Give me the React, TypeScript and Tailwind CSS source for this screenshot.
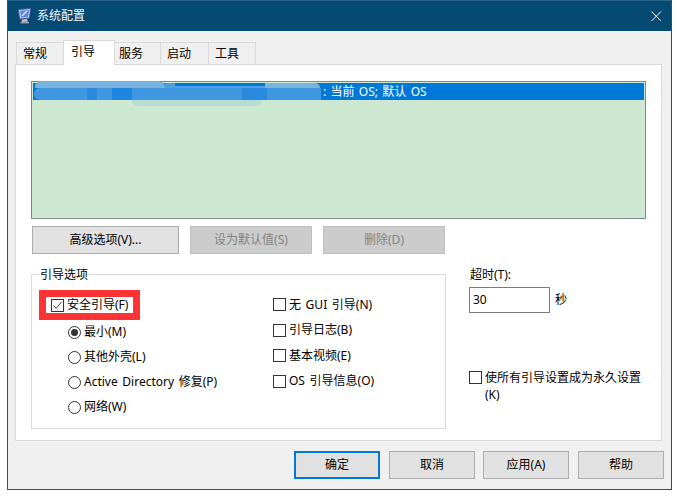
import React from "react";

const font = { fontFamily: '"Noto Sans", "Noto Sans CJK SC", sans-serif' };

function Tab({ label, active, w }: { label: string; active?: boolean; w: string }) {
  return active ? (
    <div className={`${w} relative z-10 h-[25px] -mb-px -ml-px bg-white border border-b-0 border-[#d9d9d9] pt-[3px] text-black`}>{label}</div>
  ) : (
    <div className={`${w} h-[22px] -ml-px bg-[#f0f0f0] border border-b-0 border-[#d9d9d9] flex items-center text-black`}>{label}</div>
  );
}

function Btn({ label, w, disabled, primary }: { label: string; w: string; disabled?: boolean; primary?: boolean }) {
  const cls = disabled
    ? "bg-[#cccccc] border-[#bfbfbf] text-[#838383]"
    : primary
    ? "bg-[#e1e1e1] border-[#0078d7] border-2 text-black"
    : "bg-[#e1e1e1] border-[#adadad] text-black";
  return <div className={`${w} h-[28px] border flex items-center justify-center ${cls}`}>{label}</div>;
}

function Check({ checked }: { checked?: boolean }) {
  return (
    <span className="w-[13px] h-[13px] shrink-0 border border-[#333333] bg-white flex items-center justify-center">
      {checked && (
        <svg width="11" height="11" viewBox="0 0 11 11" fill="none">
          <path d="M1.5 5.5 L4.2 8.3 L9.6 1.8" stroke="#333333" strokeWidth="1" />
        </svg>
      )}
    </span>
  );
}

function Radio({ on }: { on?: boolean }) {
  return (
    <span className="w-[13px] h-[13px] shrink-0 rounded-full border border-[#333333] bg-white flex items-center justify-center">
      {on && <span className="w-[7px] h-[7px] rounded-full bg-[#333333]" />}
    </span>
  );
}

function RadioRow({ label, on }: { label: string; on?: boolean }) {
  return (
    <div className="h-[25px] flex items-center gap-[3px] pl-[36px]">
      <Radio on={on} />
      <span className="[word-spacing:1.5px]">{label}</span>
    </div>
  );
}

function CheckRow({ label }: { label: string }) {
  return (
    <div className="h-[25.5px] flex items-center gap-[3px]">
      <Check />
      <span className="[word-spacing:1.5px]">{label}</span>
    </div>
  );
}

function MonitorIcon() {
  return (
    <svg width="15" height="16" viewBox="0 0 15 16">
      <path d="M1.5 1.5 L13.5 0.5 L12.5 10 L2.5 11 Z" fill="#c9d3ea" stroke="#4b5a9a" strokeWidth="1" />
      <path d="M3.3 2.8 L12 2 L11.2 8.8 L4 9.5 Z" fill="#5c86d8" />
      <path d="M5 8 L10 3" stroke="#dbe8ff" strokeWidth="1.4" />
      <path d="M5 11.5 L10 11 L11 13.5 L4.5 14 Z" fill="#c4c8cf" />
      <path d="M3.5 14 H12 V15.5 H3.5 Z" fill="#9a9fa8" />
    </svg>
  );
}

export default function App() {
  return (
    <div className="w-[679px] h-[497px] bg-white pl-[7px] overflow-hidden text-[12px] leading-[16px]" style={font}>
      <div className="w-[665px] h-[490px] border-x border-b border-[#1f5578] bg-[#f0f0f0] flex flex-col">
        <div className="h-[31px] shrink-0 bg-[#044a73] border-t border-[#2a6389] flex items-center pl-[9px] pr-[9px] text-white">
          <MonitorIcon />
          <span className="ml-[5px] text-[#f4f8fb]">系统配置</span>
          <svg className="ml-auto" width="12" height="12" viewBox="0 0 12 12" fill="none">
            <path d="M1.5 1.5 L11 11 M11 1.5 L1.5 11" stroke="#ffffff" strokeWidth="1" />
          </svg>
        </div>

        <div className="flex-1 flex flex-col pl-[7px] pr-[9px]">
          <div className="h-[33px] shrink-0 flex items-end pl-[2px]">
            <Tab label="常规" w="w-[48px] pl-[6px]" />
            <Tab label="引导" w="w-[52px] pl-[7px]" active />
            <Tab label="服务" w="w-[47px] pl-[4px]" />
            <Tab label="启动" w="w-[49px] pl-[6px]" />
            <Tab label="工具" w="w-[48px] pl-[6px]" />
          </div>

          <div className="h-[377px] shrink-0 bg-white border border-[#d9d9d9] pl-[15px] pr-[15px] pt-[16px] flex flex-col">
            <div className="relative h-[138px] shrink-0 border border-[#828790] bg-[#cde8d0] p-[1px]">
              <div className="h-[17px] bg-[#0078d7] text-white flex items-center pl-[290px]">
                <span className="[word-spacing:1.2px]">: 当前 OS; 默认 OS</span>
              </div>
              <div className="absolute left-[2px] top-[6px] w-[287px] h-[12px] bg-[#3f97e0] rounded-l-[6px]" />
              <div className="absolute left-[3px] -top-[1px] w-[130px] h-[7px] bg-[#7ab2e0] rounded-t-[6px]" />
              <div className="absolute left-[233px] top-[1px] w-[55px] h-[5px] bg-[#7ab2e0] rounded-tr-[6px]" />
              <div className="absolute left-[133px] top-[1px] w-[100px] h-[5px] bg-[#4d9fe2]" />
              <div className="absolute left-[143px] top-[1px] w-[90px] h-[3px] bg-[#0078d7]" />
              <div className="absolute left-[55px] top-[6px] w-[10px] h-[12px] bg-[#2a8ae0]" />
              <div className="absolute left-[80px] top-[6px] w-[20px] h-[12px] bg-[#1e86e0]" />
              <div className="absolute left-[210px] top-[6px] w-[25px] h-[12px] bg-[#2a8ae0]" />
              <div className="absolute left-[100px] top-[18px] w-[130px] h-[6px] bg-[#b8dcd2] rounded-b-[8px]" />
            </div>

            <div className="mt-[7px] flex">
              <Btn label="高级选项(V)..." w="w-[147px] ml-px" />
              <Btn label="设为默认值(S)" w="w-[122px] ml-[11px]" disabled />
              <Btn label="删除(D)" w="w-[122px] ml-[11px]" disabled />
            </div>

            <div className="mt-[20px] flex">
              <div className="relative w-[415px] h-[155px] shrink-0 border border-[#d9d9d9] flex">
                <span className="absolute left-[7px] -top-[8px] bg-white px-[1px]">引导选项</span>
                <div className="w-[241px] pt-[15px] pl-[7px] shrink-0">
                  <div className="w-[101px] h-[30px] border-[7px] border-[#ff3333] bg-white flex items-center gap-[3px] pl-[5px]">
                    <Check checked />
                    <span className="whitespace-nowrap">安全引导(F)</span>
                  </div>
                  <div className="-ml-[7px] mt-[-0.5px]">
                    <RadioRow label="最小(M)" on />
                    <RadioRow label="其他外壳(L)" />
                    <RadioRow label="Active Directory 修复(P)" />
                    <RadioRow label="网络(W)" />
                  </div>
                </div>
                <div className="pt-[17px]">
                  <CheckRow label="无 GUI 引导(N)" />
                  <CheckRow label="引导日志(B)" />
                  <CheckRow label="基本视频(E)" />
                  <CheckRow label="OS 引导信息(O)" />
                </div>
              </div>

              <div className="ml-[23px] flex-1 flex flex-col">
                <span className="-mt-[7px] pl-px">超时(T):</span>
                <div className="mt-[4px] flex items-center">
                  <div className="w-[81px] h-[26px] border border-[#7a7a7a] bg-white flex items-center pl-[3px]">30</div>
                  <span className="ml-[5px]">秒</span>
                </div>
                <div className="mt-[56px] flex items-start gap-[3px]">
                  <span className="mt-[2px]"><Check /></span>
                  <span className="leading-[17px]">使所有引导设置成为永久设置<br />(K)</span>
                </div>
              </div>
            </div>
          </div>

          <div className="mt-[10px] flex justify-end -mr-[2px]">
            <Btn label="确定" w="w-[86px]" primary />
            <Btn label="取消" w="w-[86px] ml-[9px]" />
            <Btn label="应用(A)" w="w-[86px] ml-[8px]" />
            <Btn label="帮助" w="w-[86px] ml-[9px]" />
          </div>
        </div>
      </div>
    </div>
  );
}
